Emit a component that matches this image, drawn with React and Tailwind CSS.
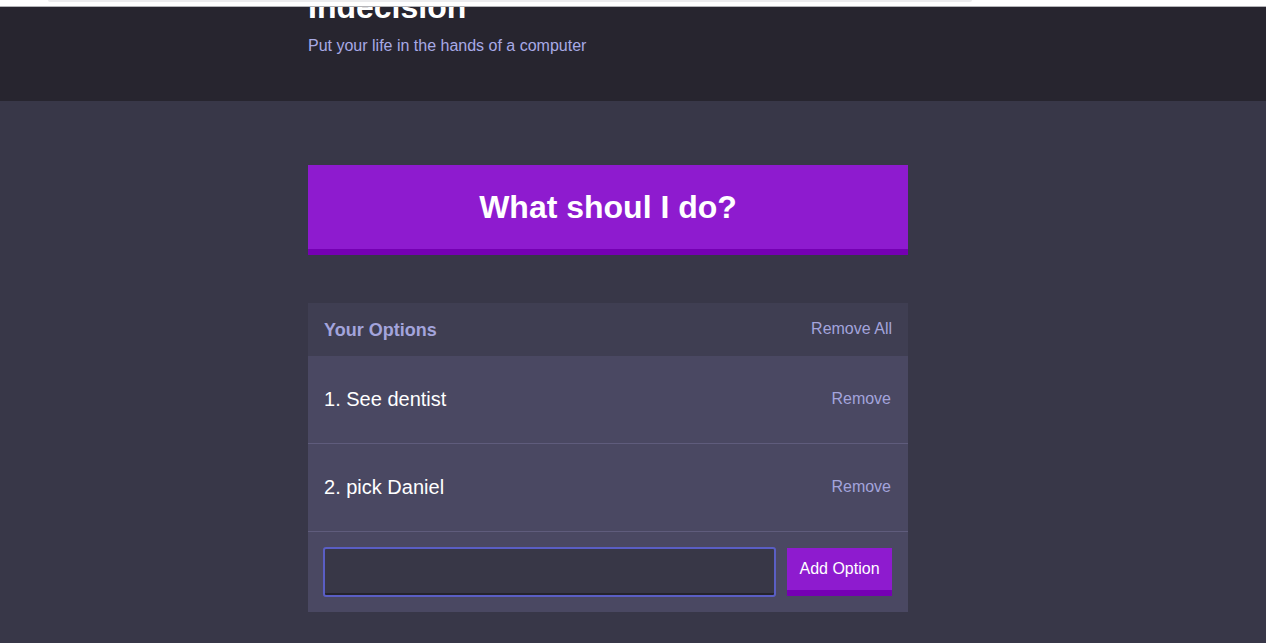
export default function App() {
  const options = ["See dentist", "pick Daniel"];
  return (
    <div className="min-h-[643px] bg-[#383748] font-['Liberation_Sans',Arial,sans-serif]">
      <div className="relative h-[7px] bg-white border-b border-[#b4b4b8]">
        <div className="absolute left-[48px] top-0 h-[2px] w-[924px] rounded-b-[6px] bg-[#ececee]" />
      </div>
      <header className="h-[94px] overflow-hidden bg-[#27252f]">
        <div className="ml-[308px] w-[600px]">
          <h1 className="mt-[-16px] text-[32px] leading-[32px] font-bold text-white">Indecision</h1>
          <p className="mt-[14px] text-[16px] leading-[18px] text-[#a8aae6]">Put your life in the hands of a computer</p>
        </div>
      </header>
      <main className="ml-[308px] w-[600px] pt-[64px]">
        <button className="block h-[90px] w-full border-b-[6px] border-[#7500b3] bg-[#8e1bcf] text-[32px] font-bold text-white">
          What shoul I do?
        </button>
        <div className="mt-[48px] bg-[#4a4862]">
          <div className="flex h-[53px] items-center justify-between bg-[#3f3e52] px-4 pt-[2px]">
            <h3 className="text-[18px] font-bold text-[#a3a4dc]">Your Options</h3>
            <button className="text-[16px] text-[#a3a4dc] -mt-[3px]">Remove All</button>
          </div>
          {options.map((o, i) => (
            <div key={o} className="flex h-[88px] items-center justify-between border-b border-[#5f5c7c] pl-4 pr-[17px] pb-[2px]">
              <p className="text-[20px] text-white">{i + 1}. {o}</p>
              <button className="text-[16px] text-[#a3a4dc]">Remove</button>
            </div>
          ))}
          <form className="flex gap-[12px] px-4 pt-[16px] pb-[16px]" onSubmit={(e) => e.preventDefault()}>
            <input
              className="h-[48px] flex-1 rounded-[2px] border-b-[3px] border-[#25242c] bg-[#383747] text-white outline-2 outline-solid -outline-offset-1 outline-[#5a5ec4]"
              type="text"
            />
            <button className="h-[48px] w-[105px] border-b-[6px] border-[#7500b3] bg-[#8e1bcf] text-[16px] text-white">
              Add Option
            </button>
          </form>
        </div>
      </main>
    </div>
  );
}
